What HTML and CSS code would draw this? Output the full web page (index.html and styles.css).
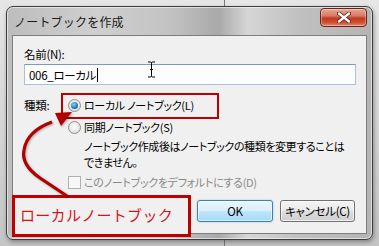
FILE: index.html
```html
<!DOCTYPE html>
<html lang="ja">
<head>
<meta charset="utf-8">
<link rel="stylesheet" href="styles.css">
</head>
<body>
<div class="stage">
  <div class="window">
    <div class="titlebar">
      <span class="title">ノートブックを作成</span>
      <span class="close"><svg width="14" height="11" viewBox="0 0 14 11"><path d="M2 1.5 L12 9.5 M12 1.5 L2 9.5" stroke="#5a1a10" stroke-width="4" stroke-linecap="round"/><path d="M2 1.5 L12 9.5 M12 1.5 L2 9.5" stroke="#fff" stroke-width="2.4" stroke-linecap="round"/></svg></span>
    </div>
    <div class="client">
      <div class="label">名前(N):</div>
      <div class="input"><span class="value">006_ローカル</span><span class="caret"></span></div>
      <div class="type-row">
        <div class="type-label">種類:</div>
        <div class="options">
          <div class="opt"><span class="radio checked"></span><span>ローカル ノートブック(L)</span></div>
          <div class="opt"><span class="radio"></span><span>同期ノートブック(S)</span></div>
          <div class="desc">ノートブック作成後はノートブックの種類を変更することは<br>できません。</div>
          <div class="opt disabled"><span class="check"></span><span>このノートブックをデフォルトにする(D)</span></div>
        </div>
      </div>
      <div class="buttons">
        <span class="btn default">OK</span>
        <span class="btn">キャンセル(C)</span>
      </div>
    </div>
  </div>
  <div class="highlight"></div>
  <div class="callout">ローカルノートブック</div>
  <svg class="arrow" width="379" height="246" viewBox="0 0 379 246">
    <path d="M67 196 L40 178 Q21 165 24 150 Q27 131 52 122" fill="none" stroke="#b00000" stroke-width="3.2"/>
    <polygon points="72,112 55,113 61,126" fill="#b00000"/>
  </svg>
  <svg class="ibeam" width="9" height="17" viewBox="0 0 9 17">
    <path d="M1 1 H3.5 Q4.5 1 4.5 2.5 V14.5 Q4.5 16 3.5 16 H1 M8 1 H5.5 Q4.5 1 4.5 2.5 M4.5 14.5 Q4.5 16 5.5 16 H8 M3 8.5 H6" fill="none" stroke="#000" stroke-width="1"/>
  </svg>
</div>
</body>
</html>
```
FILE: styles.css
```css
html, body {
  margin: 0;
  padding: 0;
}
body {
  width: 379px;
  height: 246px;
  overflow: hidden;
  font-family: "Noto Sans CJK JP", "Noto Sans", sans-serif;
  font-size: 12px;
  font-feature-settings: "palt";
  color: #000;
}
.stage {
  position: relative;
  width: 379px;
  height: 246px;
  background:
    linear-gradient(90deg, transparent 224px, #7a7a7a 224px, #7a7a7a 225px, transparent 225px),
    linear-gradient(180deg, #e6e6e6, #d2d2d2 60%, #c4c4c4);
  padding: 6px 0 0 6px;
  box-sizing: border-box;
}
.window {
  width: 367px;
  height: 234px;
  box-sizing: border-box;
  border: 1px solid #3d3d3d;
  border-radius: 7px;
  padding: 0 5px 5px 5px;
  display: flex;
  flex-direction: column;
  background: linear-gradient(90deg, #bdbdbd 0%, #cfcfcf 25%, #c2c2c2 45%, #a9a9a9 58%, #d6d6d6 66%, #c0c0c0 80%, #b4b4b4 100%);
  box-shadow: inset 0 0 0 1px rgba(255,255,255,0.55), 1px 2px 4px rgba(0,0,0,0.35);
}
.titlebar {
  height: 28px;
  display: flex;
  align-items: flex-start;
  justify-content: space-between;
}
.title {
  margin-top: 7px;
  margin-left: 2px;
  font-size: 12px;
  line-height: 16px;
  color: #1a1a1a;
  letter-spacing: 0.2px;
  font-feature-settings: normal;
}
.close {
  width: 47px;
  height: 19px;
  margin-top: 1px;
  box-sizing: border-box;
  border: 1px solid #6e2216;
  border-radius: 4px;
  background: linear-gradient(180deg, #e9a794 0%, #d77a62 40%, #c2381d 55%, #cf5235 80%, #e08a6c 100%);
  box-shadow: inset 0 0 0 1px rgba(255,255,255,0.35);
  display: flex;
  align-items: center;
  justify-content: center;
}
.client {
  height: 199px;
  box-sizing: border-box;
  border: 1px solid #7d7d7d;
  background: #f0f0f0;
  padding: 10px 10px 0 11px;
  display: flex;
  flex-direction: column;
  font-size: 11px;
  letter-spacing: -0.3px;
}
.label {
  line-height: 16px;
  font-size: 11.5px;
}
.input {
  margin-top: 2px;
  width: 332px;
  height: 21px;
  box-sizing: border-box;
  border: 1px solid #abc0d6;
  border-top-color: #7a9abf;
  background: #fdfdfd;
  padding-left: 4px;
  display: flex;
  align-items: center;
  line-height: 16px;
  font-size: 11.5px;
}
.caret {
  width: 1px;
  height: 14px;
  background: #000;
  margin-left: 1px;
}
.type-row {
  margin-top: 12px;
  display: flex;
}
.type-label {
  width: 44px;
  line-height: 16px;
  font-size: 11.5px;
}
.options {
  display: flex;
  flex-direction: column;
  white-space: nowrap;
}
.opt {
  display: flex;
  align-items: center;
  gap: 3px;
  line-height: 16px;
  height: 16px;
}
.opt + .opt {
  margin-top: 6px;
}
.radio {
  width: 13px;
  height: 13px;
  box-sizing: border-box;
  border-radius: 50%;
  border: 1px solid #8e8f8f;
  background: radial-gradient(circle at 50% 40%, #ffffff, #e2e2e2 70%, #cfcfcf);
  display: flex;
  align-items: center;
  justify-content: center;
}
.radio.checked::after {
  content: "";
  width: 7px;
  height: 7px;
  border-radius: 50%;
  background: radial-gradient(circle at 40% 35%, #8fd0f5, #2a7dbd 55%, #144e86);
}
.desc {
  margin-top: 3px;
  margin-left: 16px;
  line-height: 16px;
  letter-spacing: -0.4px;
}
.opt.disabled {
  margin-top: 4px;
  color: #8a8a8a;
}
.check {
  width: 13px;
  height: 13px;
  box-sizing: border-box;
  border: 1px solid #b1b1b1;
  background: #f7f7f7;
}
.buttons {
  margin-top: 10px;
  display: flex;
  justify-content: flex-end;
  gap: 7px;
  padding-right: 1px;
}
.btn {
  width: 75px;
  height: 22px;
  box-sizing: border-box;
  border: 1px solid #707070;
  border-radius: 3px;
  background: linear-gradient(180deg, #f3f3f3 0%, #ebebeb 48%, #dddddd 52%, #cfcfcf 100%);
  box-shadow: inset 0 0 0 1px rgba(255,255,255,0.7);
  display: flex;
  align-items: center;
  justify-content: center;
  line-height: 16px;
  white-space: nowrap;
  font-size: 11.5px;
}
.btn.default {
  width: 76px;
  border-color: #3c7fb1;
  background: linear-gradient(180deg, #eaf6fd 0%, #d9f0fc 48%, #bee6fd 52%, #a7d9f5 100%);
  box-shadow: inset 0 0 0 1px rgba(255,255,255,0.6), 0 0 2px rgba(80,170,230,0.6);
}
.highlight {
  position: absolute;
  left: 61px;
  top: 93px;
  width: 158px;
  height: 26px;
  box-sizing: border-box;
  border: 2px solid #c00000;
}
.callout {
  position: absolute;
  left: 12px;
  top: 195px;
  width: 179px;
  height: 42px;
  box-sizing: border-box;
  border: 3px solid #c00000;
  background: #f0f0f0;
  padding: 6px 0 0 5px;
  font-size: 15px;
  line-height: 22px;
  letter-spacing: 0.3px;
  color: #d2141c;
  font-feature-settings: normal;
}
.arrow {
  position: absolute;
  left: 0;
  top: 0;
  pointer-events: none;
  filter: drop-shadow(1px 1px 1px rgba(0,0,0,0.3));
}
.ibeam {
  position: absolute;
  left: 147px;
  top: 61px;
}
```
